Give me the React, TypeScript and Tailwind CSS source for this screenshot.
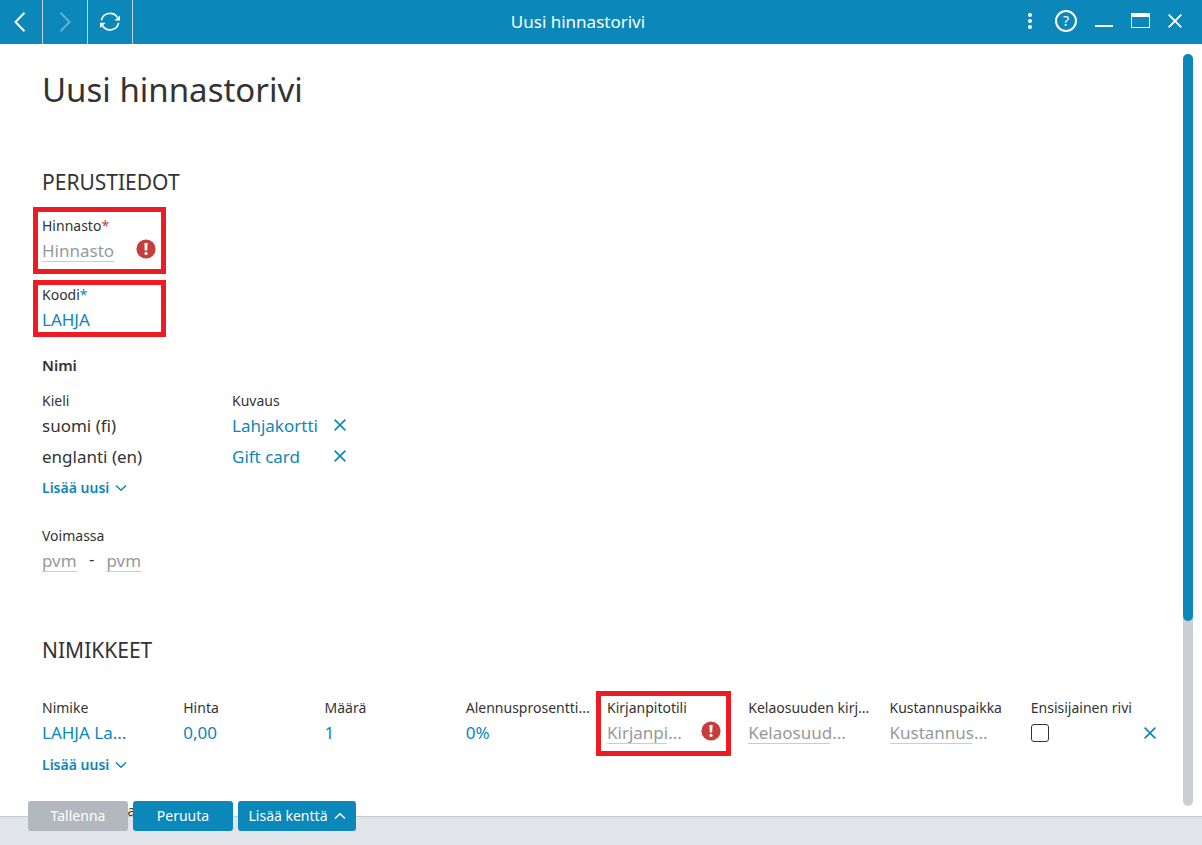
import { useState } from 'react';
import clsx from 'clsx';

interface IconProps {
  className?: string;
}

function CloseIcon({ className }: IconProps) {
  return (
    <svg viewBox="0 0 12 12" className={className} fill="none" stroke="currentColor" strokeWidth="1.6" aria-hidden="true">
      <path d="M0.6 0.6 11.4 11.4M11.4 0.6 0.6 11.4" />
    </svg>
  );
}

function ChevronIcon({ className }: IconProps) {
  return (
    <svg viewBox="0 0 12 8" className={className} fill="none" stroke="currentColor" strokeWidth="1.5" aria-hidden="true">
      <path d="M1 1.5 6 6.2 11 1.5" />
    </svg>
  );
}

function ArrowIcon({ className }: IconProps) {
  return (
    <svg viewBox="0 0 12 20" className={className} fill="none" stroke="currentColor" strokeWidth="2" aria-hidden="true">
      <path d="M10.5 0.8 1.5 10l9 9.2" />
    </svg>
  );
}

function RefreshIcon({ className }: IconProps) {
  return (
    <svg viewBox="0 0 20 20" className={className} fill="none" stroke="currentColor" strokeWidth="1.7" aria-hidden="true">
      <path d="M1.4 8.4A8.8 8.8 0 0 1 17.4 5.4M18.6 10.8A8.8 8.8 0 0 1 2.6 13.8" />
      <path d="M20 3.4v5.2h-5.6zM0 16v-5.2h5.6z" fill="currentColor" stroke="none" />
    </svg>
  );
}

function ErrorIcon({ className }: IconProps) {
  return (
    <svg viewBox="0 0 20 20" className={className} role="img" aria-label="Virhe">
      <circle cx="10" cy="10" r="9.6" fill="#c83c3c" />
      <path d="M8.4 4h3.2l-.4 7.6H8.8z" fill="#fff" />
      <circle cx="10" cy="14.4" r="1.6" fill="#fff" />
    </svg>
  );
}

interface FieldInputProps {
  id?: string;
  label?: string;
  placeholder?: string;
  value?: string;
  className?: string;
}

// The underline is a background so that it can end before the ellipsis.
function FieldInput({ id, label, placeholder, value = '', className }: FieldInputProps) {
  const [text, setText] = useState(value);

  return (
    <input
      id={id}
      aria-label={label}
      type="text"
      value={text}
      placeholder={placeholder}
      onChange={(e) => setText(e.target.value)}
      className={clsx(
        'block h-[26px] min-w-0 bg-no-repeat bg-left-bottom pt-0.5 text-[17px] leading-[22px] text-[#0b87ba] outline-none placeholder:text-[#96999c]',
        placeholder && 'bg-[linear-gradient(#c8cdd1,#c8cdd1)]',
        className,
      )}
    />
  );
}

function AddLink() {
  return (
    <button type="button" className="flex items-center gap-[6px] text-sm leading-5 font-semibold text-[#0b87ba]">
      Lisää uusi
      <ChevronIcon className="h-2 w-3" />
    </button>
  );
}

function Highlight({ className }: IconProps) {
  return <span className={clsx('pointer-events-none absolute border-[5px] border-[#ed1c24]', className)} />;
}

const names = [
  { lang: 'suomi (fi)', text: 'Lahjakortti' },
  { lang: 'englanti (en)', text: 'Gift card' },
];

const headings = [
  'Nimike',
  'Hinta',
  'Määrä',
  'Alennusprosentti...',
  'Kirjanpitotili',
  'Kelaosuuden kirj...',
  'Kustannuspaikka',
  'Ensisijainen rivi',
];

function TitleBar() {
  return (
    <header className="flex h-11 shrink-0 bg-[#0b87ba] text-white">
      <nav className="flex">
        <button type="button" aria-label="Takaisin" className="flex w-[43px] items-center border-r border-[#c8d4da] pl-[14px]">
          <ArrowIcon className="h-5 w-3" />
        </button>
        <button
          type="button"
          aria-label="Eteenpäin"
          disabled
          className="flex w-[45px] items-center justify-center border-r border-[#c8d4da] text-white/35"
        >
          <ArrowIcon className="h-5 w-3 rotate-180" />
        </button>
        <button type="button" aria-label="Päivitä" className="flex w-[45px] items-center justify-center border-r border-[#c8d4da]">
          <RefreshIcon className="size-5" />
        </button>
      </nav>
      <p className="flex-1 text-center text-[17px] leading-[43px]">Uusi hinnastorivi</p>
      <div className="flex items-center gap-[18px] pr-5 pb-[3px]">
        <button type="button" aria-label="Valikko" className="px-1">
          <svg viewBox="0 0 6 18" className="h-[18px] w-[6px]" fill="currentColor" aria-hidden="true">
            <circle cx="3" cy="3" r="2" />
            <circle cx="3" cy="9" r="2" />
            <circle cx="3" cy="15" r="2" />
          </svg>
        </button>
        <button
          type="button"
          aria-label="Ohje"
          className="flex size-[22px] items-center justify-center rounded-full border-2 border-white text-sm leading-none"
        >
          ?
        </button>
        <button type="button" aria-label="Pienennä" className="flex h-[22px] w-[18px] items-end pb-[5px]">
          <span className="h-[2px] w-full bg-white" />
        </button>
        <button type="button" aria-label="Suurenna" className="h-[15px] w-[19px] border border-t-4 border-white" />
        <button type="button" aria-label="Sulje">
          <CloseIcon className="size-[14px]" />
        </button>
      </div>
    </header>
  );
}

function BasicDetails() {
  return (
    <section className="mt-14">
      <h2 className="text-[21px] leading-7">PERUSTIEDOT</h2>

      <div className="mt-5 flex flex-col gap-[23px]">
        <div className="relative w-[114px]">
          <Highlight className="-top-[9px] -left-[9px] h-[67px] w-[133px]" />
          <label htmlFor="pricelist" className="block text-sm leading-5">
            Hinnasto<span className="text-[#c83c3c]">*</span>
          </label>
          <div className="flex items-center justify-between">
            <FieldInput id="pricelist" placeholder="Hinnasto" className="w-[72px] bg-size-[100%_1px]" />
            <ErrorIcon className="size-5 shrink-0" />
          </div>
        </div>
        <div className="relative w-[114px]">
          <Highlight className="-top-[5px] -left-[9px] h-[57px] w-[133px]" />
          <label htmlFor="code" className="block text-sm leading-5">
            Koodi<span className="text-[#0b87ba]">*</span>
          </label>
          <FieldInput id="code" value="LAHJA" className="w-full" />
        </div>
      </div>

      <h3 className="mt-6 text-[15px] leading-5 font-semibold">Nimi</h3>
      <table className="mt-4 text-left">
        <thead>
          <tr className="text-sm leading-5">
            <th className="w-[190px] p-0 font-normal">Kieli</th>
            <th className="w-[102px] p-0 font-normal">Kuvaus</th>
            <td />
          </tr>
        </thead>
        <tbody>
          {names.map((name) => (
            <tr key={name.lang} className="h-[31px] align-top text-[17px] leading-[22px]">
              <td className="p-0 pt-1">{name.lang}</td>
              <td className="p-0">
                <FieldInput label={`Kuvaus, ${name.lang}`} value={name.text} className="w-[96px]" />
              </td>
              <td className="p-0">
                <button type="button" aria-label={`Poista ${name.lang}`} className="flex h-7 items-center text-[#0b87ba]">
                  <CloseIcon className="size-3" />
                </button>
              </td>
            </tr>
          ))}
        </tbody>
      </table>
      <div className="mt-[5px]">
        <AddLink />
      </div>

      <fieldset className="mt-7">
        <legend className="text-sm leading-5">Voimassa</legend>
        <div className="flex gap-3 text-[17px] leading-[22px]">
          <FieldInput label="Voimassa alkaen" placeholder="pvm" className="w-[35px] bg-size-[100%_1px]" />
          <span className="pt-0.5">-</span>
          <FieldInput label="Voimassa asti" placeholder="pvm" className="w-[35px] bg-size-[100%_1px]" />
        </div>
      </fieldset>
    </section>
  );
}

function Items() {
  return (
    <section className="mt-16">
      <h2 className="text-[21px] leading-7">NIMIKKEET</h2>
      <table className="mt-[34px] w-full table-fixed text-left">
        <thead>
          <tr className="text-sm leading-5">
            {headings.map((heading) => (
              <th key={heading} className="relative p-0 font-normal whitespace-nowrap">
                {heading}
                {heading === 'Kirjanpitotili' && <Highlight className="-top-[7px] -left-[11px] h-[65px] w-[135px]" />}
              </th>
            ))}
          </tr>
        </thead>
        <tbody>
          <tr>
            <td className="p-0">
              <FieldInput label="Nimike" value="LAHJA La..." className="w-[114px]" />
            </td>
            <td className="p-0">
              <FieldInput label="Hinta" value="0,00" className="w-[114px]" />
            </td>
            <td className="p-0">
              <FieldInput label="Määrä" value="1" className="w-[114px]" />
            </td>
            <td className="p-0">
              <FieldInput label="Alennusprosentti" value="0%" className="w-[114px]" />
            </td>
            <td className="p-0">
              <div className="flex w-[114px] items-center justify-between">
                <FieldInput label="Kirjanpitotili" placeholder="Kirjanpi..." className="w-[80px] bg-size-[60px_1px]" />
                <ErrorIcon className="size-5 shrink-0" />
              </div>
            </td>
            <td className="p-0">
              <FieldInput label="Kelaosuuden kirjanpitotili" placeholder="Kelaosuud..." className="w-[114px] bg-size-[82px_1px]" />
            </td>
            <td className="p-0">
              <FieldInput label="Kustannuspaikka" placeholder="Kustannus..." className="w-[114px] bg-size-[82px_1px]" />
            </td>
            <td className="p-0">
              <div className="flex h-[26px] items-center justify-between pt-1 pr-4">
                <input
                  type="checkbox"
                  aria-label="Ensisijainen rivi"
                  className="size-[18px] appearance-none rounded-[3px] border border-[#333] bg-white checked:bg-[#0b87ba]"
                />
                <button type="button" aria-label="Poista rivi" className="text-[#0b87ba]">
                  <CloseIcon className="size-3" />
                </button>
              </div>
            </td>
          </tr>
        </tbody>
      </table>
      <div className="mt-[11px]">
        <AddLink />
      </div>
      <p className="mt-[26px] text-sm leading-5">Kirjanpitotapa</p>
    </section>
  );
}

export default function App() {
  return (
    <div className="flex h-screen flex-col overflow-hidden bg-white font-['Noto_Sans',sans-serif] text-[#333]">
      <TitleBar />

      <div className="flex min-h-0 flex-1">
        <main className="min-w-0 flex-1 overflow-hidden pt-6 pr-[11px] pl-[42px]">
          <h1 className="text-[33px] leading-11">Uusi hinnastorivi</h1>
          <BasicDetails />
          <Items />
        </main>
        <div className="my-[10px] mr-[9px] w-[10px] shrink-0 rounded-full bg-[#c9cfd4]">
          <div className="h-[75.4%] rounded-full bg-[#0b87ba]" />
        </div>
      </div>

      <footer className="h-[29px] shrink-0 border-t border-[#c8cdd1] bg-[#e1e5ea]">
        <div className="relative -mt-4 flex gap-[5px] pl-7 text-sm text-white">
          <button type="button" disabled className="h-[30px] w-[100px] rounded-[3px] bg-[#b2b8bd]">
            Tallenna
          </button>
          <button type="button" className="h-[30px] w-[100px] rounded-[3px] bg-[#0b87ba]">
            Peruuta
          </button>
          <button type="button" className="flex h-[30px] w-[118px] items-center justify-center gap-[6px] rounded-[3px] bg-[#0b87ba]">
            Lisää kenttä
            <ChevronIcon className="h-2 w-3 rotate-180" />
          </button>
        </div>
      </footer>
    </div>
  );
}
